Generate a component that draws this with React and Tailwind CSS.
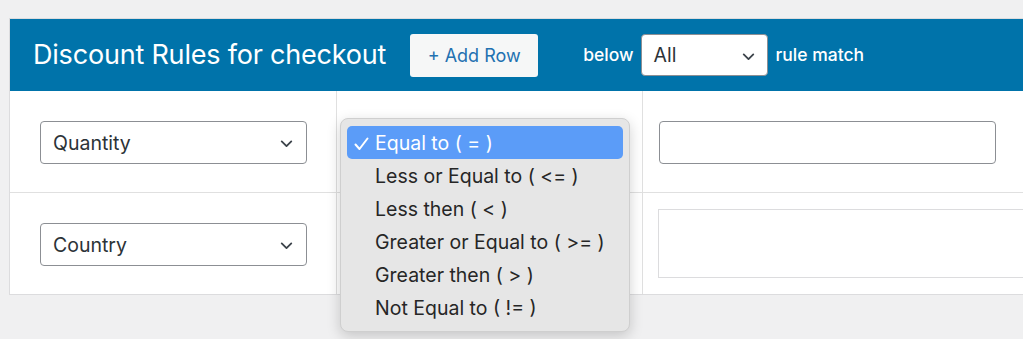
import React from "react";

const Chevron = ({ className = "" }) => (
  <svg className={className} width="17" height="17" viewBox="0 0 16 16" fill="none">
    <path d="M3.5 6l4.5 4.5L12.5 6" stroke="#3c434a" strokeWidth="1.7" strokeLinecap="round" strokeLinejoin="round" />
  </svg>
);

const Select = ({ label }) => (
  <div className="flex items-center justify-between w-[267px] h-[43px] border border-[#8c8f94] rounded-[4px] bg-white pl-[12px] pr-[11px] pt-[2px] text-[19.5px] text-[#2c3338]">
    <span>{label}</span>
    <Chevron />
  </div>
);

const items = [
  "Equal to ( = )",
  "Less or Equal to ( <= )",
  "Less then ( < )",
  "Greater or Equal to ( >= )",
  "Greater then ( > )",
  "Not Equal to ( != )",
];

export default function App() {
  return (
    <div className="w-[1023px] h-[339px] bg-[#f0f0f1] overflow-hidden pt-[18px] pl-[9px]" style={{ fontFamily: "Inter, 'Noto Sans', sans-serif" }}>
      <div className="relative w-[1030px] border border-[#dcdcde] bg-white">
        <div className="h-[72px] bg-[#0073aa] flex items-center pl-[23px]">
          <h1 className="text-white text-[27px] font-normal tracking-[-0.2px]">Discount Rules for checkout</h1>
          <button className="ml-[24px] h-[43px] w-[128px] bg-[#f6f7f7] rounded-[3px] text-[#2271b1] text-[18px]">+ Add Row</button>
          <span className="ml-[45px] text-white text-[17.5px] font-medium">below</span>
          <div className="ml-[7px] flex items-center justify-between w-[127px] h-[42px] bg-white border border-[#8c8f94] rounded-[4px] pl-[12px] pr-[10px] pt-[2px] text-[19.5px] text-[#2c3338]">
            <span>All</span>
            <Chevron />
          </div>
          <span className="ml-[8px] text-white text-[17.5px] font-medium">rule match</span>
        </div>
        <div className="flex h-[102px] border-b border-[#e0e0e0]">
          <div className="w-[327px] shrink-0 border-r border-[#e0e0e0] flex items-center pl-[30px] pt-[2px]">
            <Select label="Quantity" />
          </div>
          <div className="w-[306px] shrink-0 border-r border-[#e0e0e0]"></div>
          <div className="flex-1 flex items-center pl-[16px] pt-[2px]">
            <div className="w-[337px] h-[43px] border border-[#8c8f94] rounded-[4px] bg-white"></div>
          </div>
        </div>
        <div className="flex h-[101px]">
          <div className="w-[327px] shrink-0 border-r border-[#e0e0e0] flex items-center pl-[30px] pt-[2px]">
            <Select label="Country" />
          </div>
          <div className="w-[306px] shrink-0 border-r border-[#e0e0e0]"></div>
          <div className="flex-1 pl-[15px] pt-[16px]">
            <div className="w-[400px] h-[69px] border border-[#dcdcde] bg-white"></div>
          </div>
        </div>

        <div className="absolute left-[330px] top-[99px] w-[290px] h-[214px] bg-[#e6e6e6] border border-[#cfcfcf] rounded-[8px] shadow-[0_4px_14px_rgba(0,0,0,0.18)] px-[6px] pt-[7px]">
          {items.map((t, i) => (
            <div
              key={t}
              className={
                "relative h-[33px] flex items-center pl-[28px] pt-[3px] rounded-[5px] text-[19.5px] " +
                (i === 0 ? "bg-[#5b9cf8] text-white" : "text-[#262626]")
              }
            >
              {i === 0 && (
                <svg className="absolute left-[7px] top-[11px]" width="15" height="14" viewBox="0 0 15 14" fill="none">
                  <path d="M1.5 7.5l4 4.5L13.5 1.5" stroke="white" strokeWidth="2" strokeLinecap="round" strokeLinejoin="round" />
                </svg>
              )}
              {t}
            </div>
          ))}
        </div>
      </div>
    </div>
  );
}
